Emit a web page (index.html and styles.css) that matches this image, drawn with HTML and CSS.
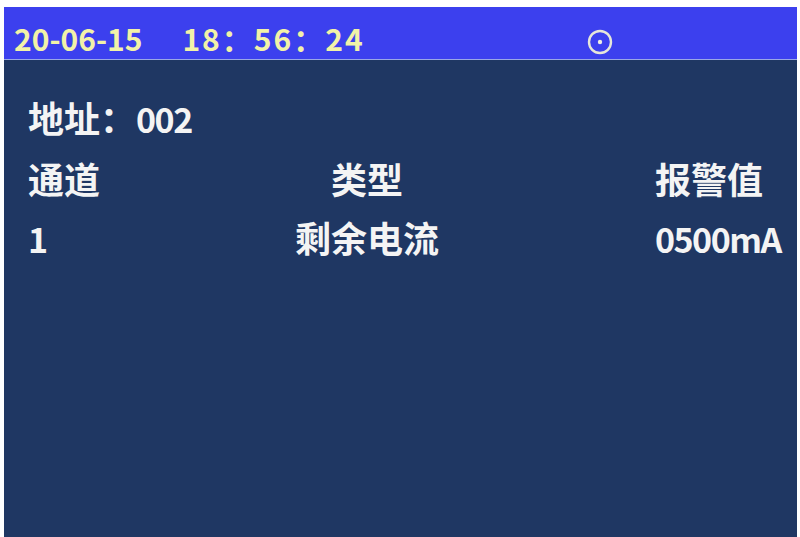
FILE: index.html
```html
<!DOCTYPE html>
<html lang="zh-CN">
<head>
<meta charset="utf-8">
<title>报警值</title>
<link rel="stylesheet" href="styles.css">
</head>
<body>
<div class="screen">
  <header class="topbar">
    <span class="clock"><span class="date">20-06-15</span><span class="time">18：56：24</span></span>
    <svg class="status" width="26" height="26" viewBox="0 0 26 26" aria-hidden="true">
      <circle cx="13" cy="13" r="11" fill="none" stroke="#e6e6da" stroke-width="2.4"/>
      <circle cx="13" cy="13" r="2.2" fill="#eeeee4"/>
    </svg>
  </header>
  <main class="content">
    <div class="addr">地址：<span class="num">002</span></div>
    <div class="table">
      <div class="c1">通道</div>
      <div class="c2">类型</div>
      <div class="c3">报警值</div>
      <div class="c1"><span class="num">1</span></div>
      <div class="c2">剩余电流</div>
      <div class="c3"><span class="num">0500mA</span></div>
    </div>
  </main>
</div>
</body>
</html>
```
FILE: styles.css
```css
html, body {
  margin: 0;
  padding: 0;
  background: #ffffff;
}
body {
  font-family: "Noto Sans CJK SC", "Noto Sans", sans-serif;
  font-weight: 600;
}
.screen {
  margin: 7px 0 0 4px;
  width: 793px;
  height: 530px;
  background: #1f3763;
  display: flex;
  flex-direction: column;
  overflow: hidden;
}
.topbar {
  box-sizing: border-box;
  height: 53px;
  background: #3c40ee;
  border-bottom: 1px solid #9aa8e6;
  padding: 11px 0 0 10px;
  display: flex;
  align-items: flex-start;
  line-height: 41px;
}
.clock {
  width: 573px;
  color: #f2f2a8;
  font-size: 30px;
  white-space: nowrap;
}
.time {
  margin-left: 40px;
  letter-spacing: 2px;
}
.status {
  display: block;
  margin-top: 11px;
}
.content {
  flex: 1;
  padding: 28px 0 0 24px;
  color: #f4f4f4;
  font-size: 36px;
  line-height: 59.5px;
}
.num {
  font-size: 34px;
  letter-spacing: -1.5px;
}
.table {
  display: grid;
  grid-template-columns: 200px 278px 1fr;
}
.c2 {
  text-align: center;
}
.c3 {
  padding-left: 149px;
}
```
